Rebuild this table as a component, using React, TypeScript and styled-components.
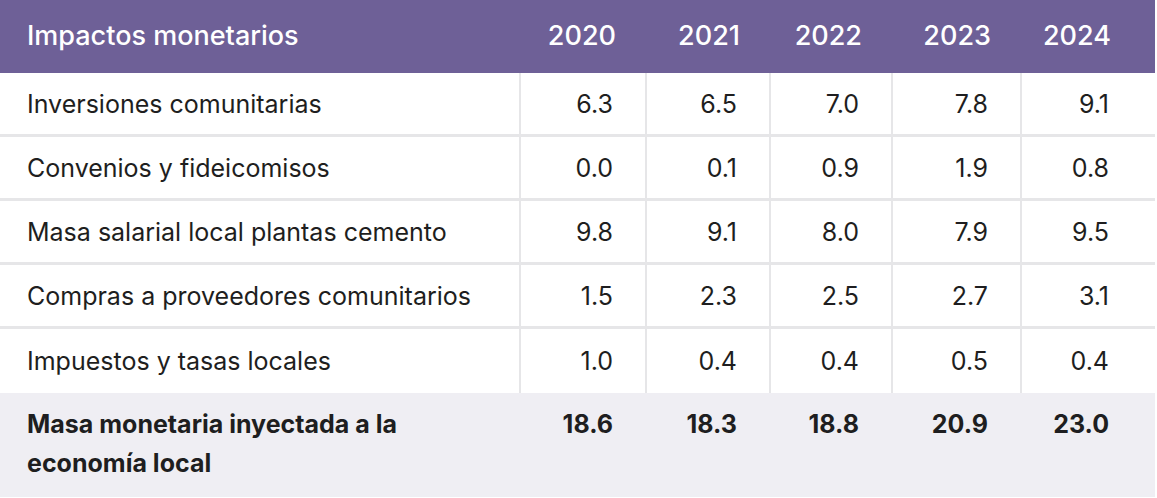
import styled, { createGlobalStyle } from 'styled-components';

const GlobalStyle = createGlobalStyle`
  body {
    margin: 0;
    background: #ffffff;
    font-family: 'Inter', 'Liberation Sans', sans-serif;
  }
`;

const Table = styled.div`
  width: 1155px;
  color: #1e1e20;
`;

const Row = styled.div<{ $variant?: 'head' | 'body' | 'total'; $lined?: boolean }>`
  display: grid;
  grid-template-columns: 519px 126px 124px 122px 129px 135px;
  height: ${(p) => (p.$variant === 'head' ? '73px' : p.$variant === 'total' ? 'auto' : '64px')};
  background: ${(p) =>
    p.$variant === 'head' ? '#6e6097' : p.$variant === 'total' ? '#efeef3' : '#ffffff'};
  border-bottom: ${(p) => (p.$lined ? '3px solid #e6e6e8' : 'none')};
  box-sizing: border-box;
`;

const HeadCell = styled.div<{ $first?: boolean; $last?: boolean }>`
  display: flex;
  align-items: center;
  justify-content: ${(p) => (p.$first ? 'flex-start' : 'flex-end')};
  color: #ffffff;
  font-size: 27px;
  font-weight: 500;
  padding: 0 ${(p) => (p.$first ? '0' : p.$last ? '44px' : '29px')} 2px
    ${(p) => (p.$first ? '27px' : '0')};
`;

const Cell = styled.div<{ $first?: boolean; $last?: boolean }>`
  display: flex;
  align-items: center;
  justify-content: ${(p) => (p.$first ? 'flex-start' : 'flex-end')};
  font-size: 25px;
  font-weight: 400;
  padding: 0 ${(p) => (p.$first ? '0' : p.$last ? '46px' : '32px')} 0
    ${(p) => (p.$first ? '27px' : '0')};
  border-left: ${(p) => (p.$first ? 'none' : '2px solid #e6e6e8')};
`;

const TotalCell = styled.div<{ $first?: boolean; $last?: boolean }>`
  font-size: 25px;
  font-weight: 700;
  line-height: 39px;
  text-align: ${(p) => (p.$first ? 'left' : 'right')};
  padding: 12px ${(p) => (p.$first ? '100px' : p.$last ? '46px' : '32px')} 14px
    ${(p) => (p.$first ? '27px' : '0')};
`;

const years = ['2020', '2021', '2022', '2023', '2024'];

const rows: { label: string; values: string[] }[] = [
  { label: 'Inversiones comunitarias', values: ['6.3', '6.5', '7.0', '7.8', '9.1'] },
  { label: 'Convenios y fideicomisos', values: ['0.0', '0.1', '0.9', '1.9', '0.8'] },
  { label: 'Masa salarial local plantas cemento', values: ['9.8', '9.1', '8.0', '7.9', '9.5'] },
  { label: 'Compras a proveedores comunitarios', values: ['1.5', '2.3', '2.5', '2.7', '3.1'] },
  { label: 'Impuestos y tasas locales', values: ['1.0', '0.4', '0.4', '0.5', '0.4'] },
];

const totals = ['18.6', '18.3', '18.8', '20.9', '23.0'];

const App: React.FC = () => (
  <>
    <GlobalStyle />
    <Table>
      <Row $variant="head">
        <HeadCell $first>Impactos monetarios</HeadCell>
        {years.map((y, i) => (
          <HeadCell key={y} $last={i === years.length - 1}>
            {y}
          </HeadCell>
        ))}
      </Row>
      {rows.map((r, ri) => (
        <Row key={r.label} $variant="body" $lined={ri < rows.length - 1}>
          <Cell $first>{r.label}</Cell>
          {r.values.map((v, i) => (
            <Cell key={i} $last={i === r.values.length - 1}>
              {v}
            </Cell>
          ))}
        </Row>
      ))}
      <Row $variant="total">
        <TotalCell $first>Masa monetaria inyectada a la economía local</TotalCell>
        {totals.map((v, i) => (
          <TotalCell key={i} $last={i === totals.length - 1}>
            {v}
          </TotalCell>
        ))}
      </Row>
    </Table>
  </>
);

export default App;
